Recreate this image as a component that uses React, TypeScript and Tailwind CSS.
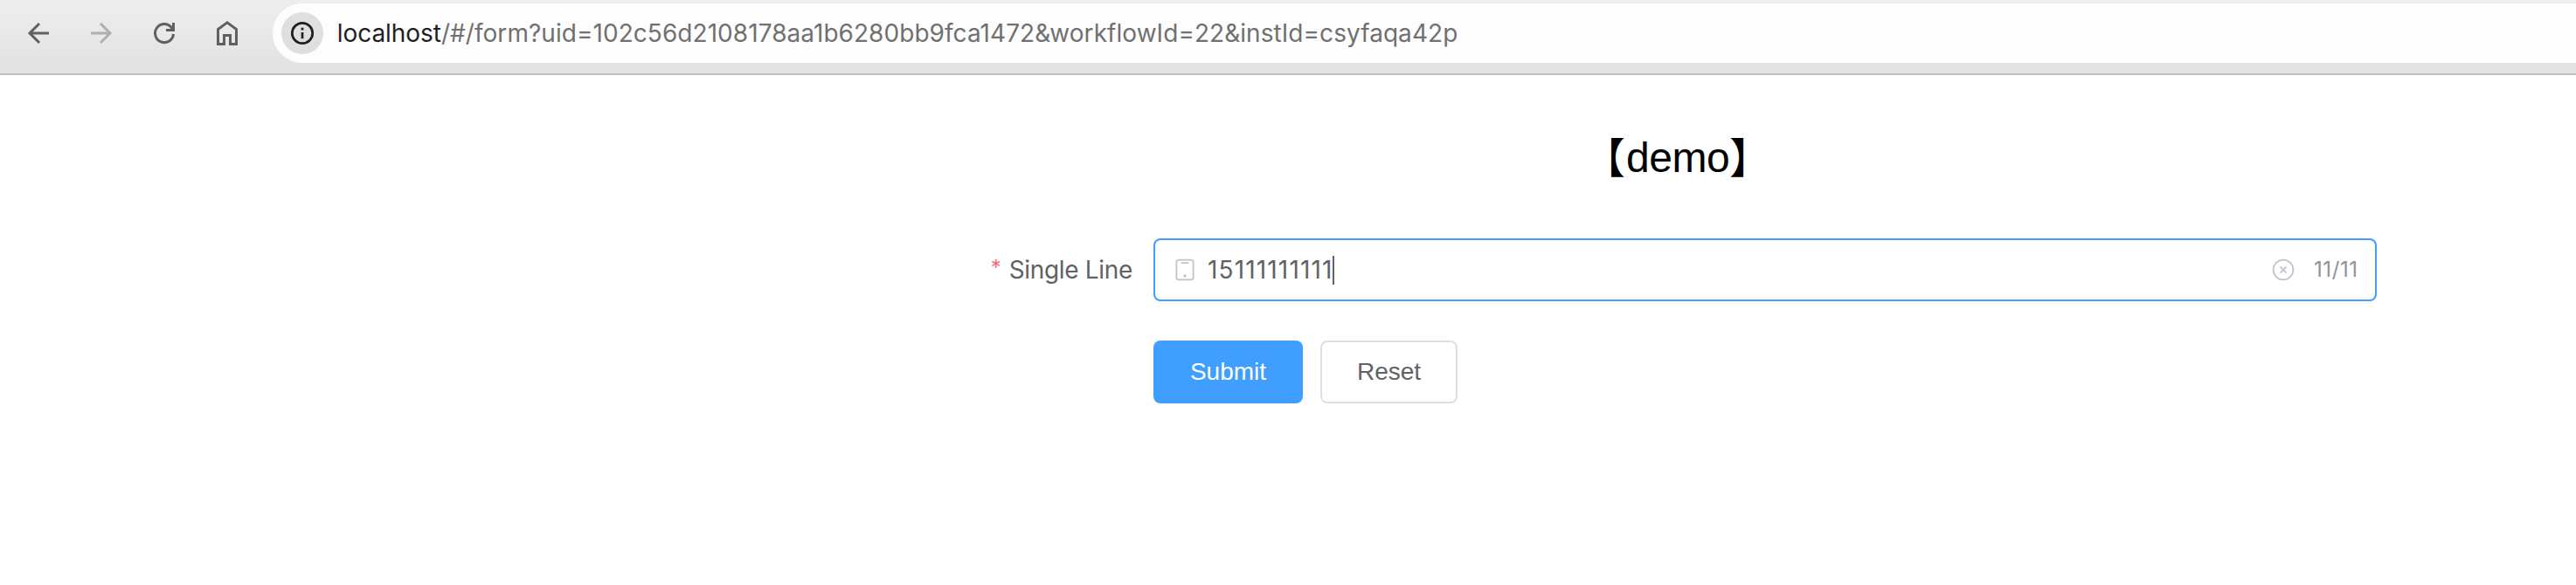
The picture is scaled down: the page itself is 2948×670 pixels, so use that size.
import React from "react";

function BrowserBar() {
  return (
    <header className="flex h-[86px] items-start border-b-2 border-[#c2c0c0] bg-linear-to-b from-[#eeeeee] to-[#e2e2e2] pt-1">
      <nav className="flex h-[68px] items-center gap-9 pl-[26px] text-[#606060]">
        <svg className="size-9" viewBox="0 0 36 36" fill="none" stroke="currentColor" strokeWidth="3">
          <path d="M30 18H8.5M19 7L8 18L19 29" />
        </svg>
        <svg className="size-9 text-[#b0b0b0]" viewBox="0 0 36 36" fill="none" stroke="currentColor" strokeWidth="3">
          <path d="M6 18H27.5M17 7L28 18L17 29" />
        </svg>
        <svg className="size-9" viewBox="0 0 36 36" fill="none" stroke="currentColor" strokeWidth="3">
          <path d="M28.5 19A10.5 10.5 0 1 1 25.8 11L28.5 14M28.5 6V14.5H20" />
        </svg>
        <svg className="size-9" viewBox="0 0 36 36" fill="none" stroke="currentColor" strokeWidth="3">
          <path d="M7.5 13.5L18 5.9L28.5 13.5V30.5H21.5V20.5H14.5V30.5H7.5Z" />
        </svg>
      </nav>
      <div className="ml-[34px] flex h-[68px] flex-1 items-center rounded-l-full bg-[#fdfdfd] pl-2.5">
        <span className="flex size-12 items-center justify-center rounded-full bg-[#dfdfdf] text-[#1f1f1f]">
          <svg className="size-7" viewBox="0 0 28 28" fill="none" stroke="currentColor" strokeWidth="2.7">
            <circle cx="14" cy="14" r="11.7" />
            <path d="M14 13V20.3M14 7.7V10.4" />
          </svg>
        </span>
        <p className="ml-[15.7px] text-[28px] whitespace-nowrap text-[#707070]">
          <span className="tracking-[-0.05px] text-[#1f1f1f]">localhost</span>
          <span className="tracking-[0.05px]">/#/form?uid=102c56d2108178aa1b6280bb9fca1472&amp;workflowId=22&amp;instId=csyfaqa42p</span>
        </p>
      </div>
    </header>
  );
}

function PhoneField() {
  return (
    <div className="flex h-[72px] w-[1400px] items-center rounded-lg border-2 border-[#409eff] bg-white pr-5 pl-5">
      <svg className="size-7 text-[#c0c4cc]" viewBox="0 0 1024 1024" fill="currentColor">
        <path d="M256 128a64 64 0 0 0-64 64v640a64 64 0 0 0 64 64h512a64 64 0 0 0 64-64V192a64 64 0 0 0-64-64zm0-64h512a128 128 0 0 1 128 128v640a128 128 0 0 1-128 128H256a128 128 0 0 1-128-128V192A128 128 0 0 1 256 64m128 128h256a32 32 0 1 1 0 64H384a32 32 0 0 1 0-64m128 640a64 64 0 1 1 0-128 64 64 0 0 1 0 128" />
      </svg>
      <span className="ml-3 text-[28px] tracking-[1.15px] text-[#606266]">15111111111</span>
      <span className="-ml-px h-[33px] w-0.5 bg-[#606266]" />
      <svg className="ml-auto size-7 text-[#c0c4cc]" viewBox="0 0 1024 1024" fill="currentColor">
        <path d="m466.8 512-90.5-90.5a32 32 0 0 1 45.2-45.2l90.5 90.5 90.5-90.5a32 32 0 0 1 45.2 45.2L557.2 512l90.5 90.5a32 32 0 0 1-45.2 45.2L512 557.2l-90.5 90.5a32 32 0 0 1-45.2-45.2z" />
        <path d="M512 896a384 384 0 1 0 0-768 384 384 0 0 0 0 768m0 64a448 448 0 1 1 0-896 448 448 0 0 1 0 896" />
      </svg>
      <span className="ml-[21px] w-[50px] text-2xl tracking-[0.6px] whitespace-nowrap text-[#909399]">11/11</span>
    </div>
  );
}

export default function App() {
  return (
    <div className="min-h-[670px] bg-white font-[Inter,sans-serif]">
      <BrowserBar />
      <main>
        <h1 className="flex h-[187px] items-center pt-0.5 pl-[1812px] text-[48px] leading-none text-black">
          <span className="w-[49px] pb-2 font-['Noto_Sans_CJK_SC',sans-serif]">【</span>
          <span className="w-[118px] font-['Liberation_Sans',sans-serif] tracking-[-0.5px]">demo</span>
          <span className="pb-2 font-['Noto_Sans_CJK_SC',sans-serif]">】</span>
        </h1>
        <form className="flex flex-col gap-[45px]" onSubmit={(e) => e.preventDefault()}>
          <div className="flex items-center">
            <label className="flex w-[1320px] justify-end pr-6 text-[28px] text-[#606266]">
              <span className="mr-[9px] pt-px text-[24px] text-[#f56c6c]">*</span>
              <span className="tracking-[-0.33px]">Single Line</span>
            </label>
            <PhoneField />
          </div>
          <div className="flex gap-5 pl-[1320px] font-['Liberation_Sans',sans-serif] text-[28px]">
            <button className="h-[72px] w-[171px] rounded-lg bg-[#409eff] text-white">Submit</button>
            <button className="h-[72px] w-[157px] rounded-lg border-2 border-[#dcdfe6] bg-white text-[#606266]">Reset</button>
          </div>
        </form>
      </main>
    </div>
  );
}
